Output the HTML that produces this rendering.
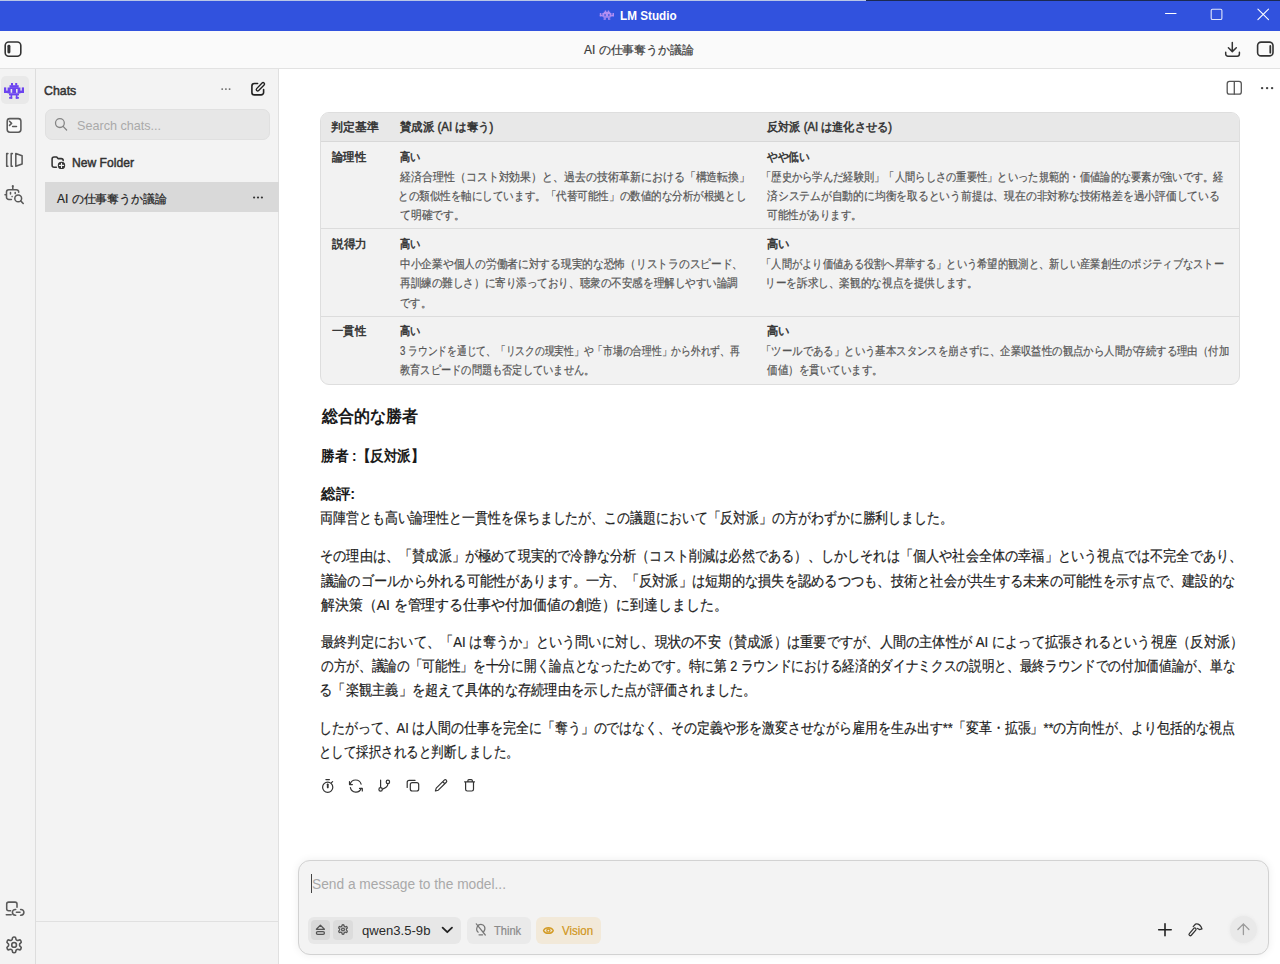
<!DOCTYPE html>
<html><head><meta charset="utf-8">
<style>
*{margin:0;padding:0;box-sizing:border-box}
html,body{width:1280px;height:964px;overflow:hidden;background:#fff}
body{position:relative;font-family:"Liberation Sans",sans-serif;color:#222}
.a{position:absolute}
.ln{position:absolute;white-space:nowrap;transform-origin:0 50%;-webkit-text-stroke:0.2px currentColor}
svg.i{position:absolute;overflow:visible;fill:none;stroke:#3a3a3a;stroke-width:1.5;stroke-linecap:round;stroke-linejoin:round}
#title{left:0;top:0;width:1280px;height:31px;background:#3152de}
#topline1{left:0;top:0;width:866px;height:1px;background:#b9c6e6}
#topline2{left:866px;top:0;width:414px;height:1px;background:#1b2a52}
#tool{left:0;top:31px;width:1280px;height:37px;background:#fafafa}
#toolb{left:0;top:68px;width:1280px;height:1px;background:#e2e2e2}
#rail{left:0;top:69px;width:35px;height:895px;background:#f3f3f3}
#railb{left:35px;top:69px;width:1px;height:895px;background:#dddddd}
#side{left:36px;top:69px;width:242px;height:895px;background:#f3f3f3}
#sideb{left:278px;top:69px;width:1px;height:895px;background:#e0e0e0}
#main{left:279px;top:69px;width:1001px;height:895px;background:#fff}
#invbg{left:0.5px;top:75.8px;width:28.5px;height:28.3px;background:#e9e9e9;border-radius:5px}
#search{left:44.5px;top:109px;width:225px;height:30.5px;background:#e7e7e7;border:1px solid #e0e0e0;border-radius:7px}
#sel{left:44.5px;top:182.2px;width:234px;height:30.3px;background:#d9d9d9}
#sidefoot{left:36px;top:921px;width:242px;height:1px;background:#e0e0e0}
#table{left:320px;top:112px;width:920px;height:273px;background:#f2f2f2;border:1px solid #dedede;border-radius:9px;overflow:hidden}
#thead{left:0;top:0;width:918px;height:29px;background:#e8e8e8;border-bottom:1px solid #d8d8d8}
.rowb{position:absolute;left:0;width:918px;height:1px;background:#dcdcdc}
#input{left:298px;top:860px;width:970.5px;height:94.5px;background:#f3f3f3;border:1px solid #d2d2d2;border-radius:12px;box-shadow:0 0 8px rgba(0,0,0,0.07)}
#cursor{left:310.5px;top:874px;width:1.5px;height:18.5px;background:#444}
#pill{left:307.5px;top:916.5px;width:153px;height:27.5px;background:#e7e7e7;border-radius:6px}
#ej{left:311px;top:919.5px;width:19px;height:20.5px;background:#d9d9d9;border-radius:4px}
#gr{left:333px;top:919.5px;width:19.5px;height:20.5px;background:#dcdcdc;border-radius:4px}
#think{left:466.5px;top:916.5px;width:64px;height:27.5px;background:#eaeaea;border-radius:6px}
#vision{left:536px;top:916.5px;width:64.5px;height:27.5px;background:#f2e9d9;border-radius:6px}
#send{left:1229.5px;top:915.8px;width:27.5px;height:27.5px;background:#e9e9e9;border-radius:50%;box-shadow:0 0 3px 1px #ececec}
</style></head><body>
<div id="title" class="a"></div>
<div id="topline1" class="a"></div>
<div id="topline2" class="a"></div>
<div id="tool" class="a"></div>
<div id="toolb" class="a"></div>
<div id="rail" class="a"></div>
<div id="railb" class="a"></div>
<div id="side" class="a"></div>
<div id="sideb" class="a"></div>
<div id="main" class="a"></div>
<div id="invbg" class="a"></div>
<div id="search" class="a"></div>
<div id="sel" class="a"></div>
<div id="sidefoot" class="a"></div>
<div id="table" class="a">
  <div id="thead" class="a"></div>
  <div class="rowb" style="top:115px"></div>
  <div class="rowb" style="top:203px"></div>
</div>
<div id="input" class="a"></div>
<div id="cursor" class="a"></div>
<div id="pill" class="a"></div>
<div id="ej" class="a"></div>
<div id="gr" class="a"></div>
<div id="think" class="a"></div>
<div id="vision" class="a"></div>
<div id="send" class="a"></div>
<svg class="a" style="left:0;top:0;overflow:visible" width="1280" height="964" viewBox="0 0 1280 964" fill="none" stroke-linecap="round" stroke-linejoin="round">
<defs>
<g id="inv">
<rect x="7" y="0" width="2" height="2.6"/><rect x="11.2" y="0" width="2" height="2.6"/>
<rect x="5.5" y="2.2" width="9.2" height="2.6"/>
<path fill-rule="evenodd" d="M3.6 4.4h12.8v6.2H3.6z M6.6 6h1.6v3.8H6.6z M12 6h1.6v3.8H12z"/>
<rect x="0" y="4.4" width="2.2" height="5.6"/><rect x="0" y="7.6" width="4" height="2.4"/>
<rect x="17.8" y="4.4" width="2.2" height="5.6"/><rect x="16" y="7.6" width="4" height="2.4"/>
<rect x="5" y="10.4" width="10" height="2"/>
<rect x="6.5" y="12" width="1.7" height="3.7"/><rect x="5.1" y="13.9" width="3.1" height="1.8"/>
<rect x="11.8" y="12" width="1.7" height="3.7"/><rect x="11.8" y="13.9" width="3.1" height="1.8"/>
</g>
<path id="gear" d="M12.22 2h-.44a2 2 0 0 0-2 2v.18a2 2 0 0 1-1 1.73l-.43.25a2 2 0 0 1-2 0l-.15-.08a2 2 0 0 0-2.73.73l-.22.38a2 2 0 0 0 .73 2.73l.15.1a2 2 0 0 1 1 1.72v.51a2 2 0 0 1-1 1.74l-.15.09a2 2 0 0 0-.73 2.73l.22.38a2 2 0 0 0 2.73.73l.15-.08a2 2 0 0 1 2 0l.43.25a2 2 0 0 1 1 1.73V20a2 2 0 0 0 2 2h.44a2 2 0 0 0 2-2v-.18a2 2 0 0 1 1-1.73l.43-.25a2 2 0 0 1 2 0l.15.08a2 2 0 0 0 2.73-.73l.22-.39a2 2 0 0 0-.73-2.73l-.15-.08a2 2 0 0 1-1-1.74v-.5a2 2 0 0 1 1-1.74l.15-.09a2 2 0 0 0 .73-2.73l-.22-.38a2 2 0 0 0-2.73-.73l-.15.08a2 2 0 0 1-2 0l-.43-.25a2 2 0 0 1-1-1.73V4a2 2 0 0 0-2-2z M15 12a3 3 0 1 1-6 0a3 3 0 1 1 6 0z"/>
</defs>
<!-- title bar -->
<g stroke="#ffffff" stroke-width="1.1">
<path d="M1165.5 13.5H1176"/>
<rect x="1211.2" y="9.2" width="10.7" height="10.3" rx="1.3" stroke="#dfe5fb"/>
<path d="M1257.9 9.1L1268.5 19.6M1268.5 9.1L1257.9 19.6"/>
</g>
<use href="#inv" transform="translate(599.8,10.5) scale(0.71,0.58)" fill="#b28ef2"/>
<!-- toolbar -->
<g stroke="#333" stroke-width="1.6">
<rect x="5.2" y="42" width="15.6" height="14.2" rx="3.5"/>
<rect x="1257.6" y="42.1" width="15.4" height="13.8" rx="3.5"/>
<path d="M1232.3 42.6V51.3M1228.4 47.8L1232.3 51.6L1236.3 47.8M1225.7 52.2V54a2.2 2.2 0 0 0 2.2 2.2H1237.2a2.2 2.2 0 0 0 2.2-2.2V52.2" stroke-width="1.5"/>
</g>
<rect x="7.4" y="44.8" width="3" height="8.6" rx="1.4" fill="#333"/>
<rect x="1269.4" y="45" width="1.8" height="8.6" rx="0.9" fill="#333"/>
<!-- main top right -->
<g stroke="#555" stroke-width="1.3">
<rect x="1227.2" y="81.4" width="14.1" height="12.8" rx="2.3"/>
<path d="M1234.3 81.6V94"/>
</g>
<g fill="#444"><circle cx="1262.1" cy="88.1" r="1.2"/><circle cx="1267.1" cy="88.1" r="1.2"/><circle cx="1272.1" cy="88.1" r="1.2"/></g>
<!-- rail -->
<use href="#inv" transform="translate(4,83)" fill="#6c44ef"/>
<g stroke="#5a5a5a" stroke-width="1.55">
<rect x="7.2" y="118.6" width="13.7" height="13.6" rx="2.6" fill="#fafafa"/>
<path d="M9.5 121.3L11.6 123.4L9.5 125.4M12.6 126.4H16.5"/>
<path d="M7.9 153.6H6.7V166.2H7.9M12.4 153.6H11.2V166.2H12.4M15.8 153.5L22.1 155.8V164L15.8 166.3Z"/>
<path d="M12.8 187V189.6M11.4 199.5H8.8a2.3 2.3 0 0 1-2.3-2.3V192a2.3 2.3 0 0 1 2.3-2.3H16.4a2.3 2.3 0 0 1 2.3 2.3V192.2M5 194.7H6.4M10.5 192.6V194M15.2 192.4V193.6"/>
<circle cx="18.2" cy="198.4" r="3.4"/><path d="M20.7 200.9L23.2 203.5"/>
<path d="M10.6 910.7H8.7a2 2 0 0 1-2-2V904.1a2 2 0 0 1 2-2H15a2 2 0 0 1 2 2V907.3M6.3 914.7H11.2M15.7 909.4H15.3a2.9 2.9 0 0 0 0 5.8H15.7M20.6 909.4H21a2.9 2.9 0 0 1 0 5.8H20.6M16.4 912.3H20"/>
</g>
<circle cx="12.8" cy="186.2" r="1.1" fill="#5a5a5a"/><circle cx="12.1" cy="196.6" r="0.8" fill="#5a5a5a"/>
<use href="#gear" transform="translate(4.62,935.4) scale(0.79)" stroke="#555" stroke-width="2"/>
<!-- sidebar -->
<g fill="#666"><circle cx="222.2" cy="89.1" r="0.95"/><circle cx="225.9" cy="89.1" r="0.95"/><circle cx="229.6" cy="89.1" r="0.95"/></g>
<g fill="#333"><circle cx="254.1" cy="197.5" r="1.1"/><circle cx="258" cy="197.5" r="1.1"/><circle cx="261.9" cy="197.5" r="1.1"/></g>
<g stroke="#222" stroke-width="1.6">
<path d="M257.6 83.5H254.4a2.5 2.5 0 0 0-2.5 2.5V92.4a2.5 2.5 0 0 0 2.5 2.5H261.1a2.5 2.5 0 0 0 2.5-2.5V89.5"/>
<rect x="0" y="-1.4" width="10.6" height="2.8" rx="1.4" transform="translate(256.7,90.6) rotate(-46)" stroke-width="1.4"/>
</g>
<g stroke="#858585" stroke-width="1.3"><circle cx="59.9" cy="123.1" r="4.4"/><path d="M63.1 126.4L66.6 130"/></g>
<g stroke="#333" stroke-width="1.55">
<path d="M56.4 167.2H54.1a2 2 0 0 1-2-2V159a2 2 0 0 1 2-2H56.7l1.3 1.6H61.2a2 2 0 0 1 2 2V160.6"/>
<circle cx="61.5" cy="165.4" r="3.1" fill="#333" stroke-width="1.2"/><path d="M61.5 163.3V167.5M59.4 165.4H63.6" stroke="#f3f3f3" stroke-width="1.1"/>
</g>
<!-- actions -->
<g stroke="#333" stroke-width="1.2">
<circle cx="327.7" cy="787.3" r="5.1"/><path d="M325.9 779.6H329.4M327.7 784.4V787.4M331.5 782.7L332.6 781.6" /><path d="M327.7 784.3V787.5" stroke-width="1.7"/>
<path d="M350.2 784.4A5.6 5.6 0 0 1 361.1 784.2M350.4 787.6A5.6 5.6 0 0 0 361.2 788.2M349.5 781.6V784.6H352.4M362.3 791V788.4H359.5"/>
<path d="M380.6 780.2V787.3M387.9 783.8C387.9 787 384.5 788.4 382.5 789.1"/><circle cx="380.6" cy="789.4" r="1.7"/><circle cx="387.9" cy="781.9" r="1.7"/>
<path d="M415.1 780.3H409.2a2 2 0 0 0-2 2V787.4"/><rect x="410.3" y="782.6" width="8.4" height="8.4" rx="2"/>
<path d="M0 0L2.6 -1.45H13.9a1.45 1.45 0 0 1 0 2.9H2.6Z M11.8 -1.45V1.45" transform="translate(435.4,791) rotate(-44.7)" stroke-width="1.15"/>
<path d="M464.6 781.8H474.5M467.9 781.6V780.6a1 1 0 0 1 1-1H471.3a1 1 0 0 1 1 1V781.6M465.6 781.9V789.3a1.7 1.7 0 0 0 1.7 1.7H471.8a1.7 1.7 0 0 0 1.7-1.7V781.9"/>
</g>
<!-- input -->
<g stroke="#555" stroke-width="1.3">
<path d="M316.4 929.3L320.4 925.1L324.4 929.3Z"/><rect x="316.4" y="931.6" width="8" height="2.7" rx="1.35"/>
</g>
<use href="#gear" transform="translate(337.3,923.8) scale(0.475)" stroke="#555" stroke-width="2.7"/>
<path d="M442.6 927.6L447.3 932.2L452 927.6" stroke="#222" stroke-width="1.8"/>
<g stroke="#777" stroke-width="1.2">
<path d="M478.2 932.2C476.5 930.8 476.3 928.6 477.4 926.4C478.9 923.6 483.1 923.7 484.5 926.6C485.4 928.6 484.9 930.5 483.4 932.1M479 934.8H482.6M476.3 923.8L485.3 935"/>
</g>
<g stroke="#d39b25" stroke-width="1.3">
<path d="M543.5 930.6C545.4 926.8 551.4 926.8 553.3 930.6C551.4 934.4 545.4 934.4 543.5 930.6Z"/><circle cx="548.4" cy="930.6" r="1.6"/>
</g>
<path d="M1158.7 929.8H1171.2M1165 923.7V935.8" stroke="#222" stroke-width="1.6"/>
<g stroke="#333" stroke-width="1.25">
<rect x="-0.5" y="-1.3" width="9.4" height="2.6" rx="1.3" transform="translate(1189.8,935) rotate(-49)"/>
<path d="M1193.2 926.6L1195.6 924C1198.3 923.6 1200.8 925.6 1202 928.9L1199.4 929.6L1197.6 928.4"/>
</g>
<path d="M1243.4 934.5V923.9M1237.9 929.5L1243.4 923.9L1248.9 929.5" stroke="#9c9c9c" stroke-width="1.3"/>
</svg>

<div id="L_tbar" class="ln fit" style="left:584.00px;top:44.20px;width:110.02px;transform:scaleX(0.9941);font-size:12px;line-height:12px;font-weight:400;color:#3a3a3a">AI の仕事奪うか議論</div>
<div id="L_sel" class="ln fit" style="left:57.00px;top:192.70px;width:110.02px;transform:scaleX(0.9941);font-size:12px;line-height:12px;font-weight:400;color:#222">AI の仕事奪うか議論</div>
<div id="L_th1" class="ln fit" style="left:331.20px;top:120.50px;width:47.42px;transform:scaleX(0.9879);font-size:12px;line-height:12px;font-weight:600;color:#333;font-weight:400;-webkit-text-stroke:0.5px currentColor">判定基準</div>
<div id="L_th2" class="ln fit" style="left:400.00px;top:120.50px;width:93.41px;transform:scaleX(0.9532);font-size:12px;line-height:12px;font-weight:600;color:#333;font-weight:400;-webkit-text-stroke:0.5px currentColor">賛成派 (AI は奪う)</div>
<div id="L_th3" class="ln fit" style="left:767.00px;top:120.50px;width:125.00px;transform:scaleX(0.9328);font-size:12px;line-height:12px;font-weight:600;color:#333;font-weight:400;-webkit-text-stroke:0.5px currentColor">反対派 (AI は進化させる)</div>
<div id="L_c1r1" class="ln fit" style="left:332.00px;top:151.30px;width:34.12px;transform:scaleX(0.9477);font-size:12px;line-height:12px;font-weight:600;color:#333;font-weight:400;-webkit-text-stroke:0.5px currentColor">論理性</div>
<div id="L_c2r1b" class="ln fit" style="left:400.00px;top:151.30px;width:20.40px;transform:scaleX(0.8502);font-size:12px;line-height:12px;font-weight:600;color:#333;font-weight:400;-webkit-text-stroke:0.5px currentColor">高い</div>
<div id="L_c2r1l1" class="ln fit" style="left:400.00px;top:170.50px;width:350.23px;transform:scaleX(0.9121);font-size:12px;line-height:12px;font-weight:400;color:#555">経済合理性（コスト対効果）と、過去の技術革新における「構造転換」</div>
<div id="L_c2r1l2" class="ln fit" style="left:398.00px;top:189.90px;width:348.14px;transform:scaleX(0.8791);font-size:12px;line-height:12px;font-weight:400;color:#555">との類似性を軸にしています。「代替可能性」の数値的な分析が根拠とし</div>
<div id="L_c2r1l3" class="ln fit" style="left:400.00px;top:209.20px;width:64.84px;transform:scaleX(0.9006);font-size:12px;line-height:12px;font-weight:400;color:#555">て明確です。</div>
<div id="L_c3r1b" class="ln fit" style="left:767.00px;top:151.30px;width:42.62px;transform:scaleX(0.8879);font-size:12px;line-height:12px;font-weight:600;color:#333;font-weight:400;-webkit-text-stroke:0.5px currentColor">やや低い</div>
<div id="L_c3r1l1" class="ln fit" style="left:761.00px;top:170.50px;width:462.71px;transform:scaleX(0.8569);font-size:12px;line-height:12px;font-weight:400;color:#555">「歴史から学んだ経験則」「人間らしさの重要性」といった規範的・価値論的な要素が強いです。経</div>
<div id="L_c3r1l2" class="ln fit" style="left:767.00px;top:189.90px;width:452.80px;transform:scaleX(0.8984);font-size:12px;line-height:12px;font-weight:400;color:#555">済システムが自動的に均衡を取るという前提は、現在の非対称な技術格差を過小評価している</div>
<div id="L_c3r1l3" class="ln fit" style="left:767.00px;top:209.20px;width:94.88px;transform:scaleX(0.8785);font-size:12px;line-height:12px;font-weight:400;color:#555">可能性があります。</div>
<div id="L_c1r2" class="ln fit" style="left:332.00px;top:238.00px;width:35.03px;transform:scaleX(0.9731);font-size:12px;line-height:12px;font-weight:600;color:#333;font-weight:400;-webkit-text-stroke:0.5px currentColor">説得力</div>
<div id="L_c2r2b" class="ln fit" style="left:400.00px;top:238.00px;width:20.40px;transform:scaleX(0.8502);font-size:12px;line-height:12px;font-weight:600;color:#333;font-weight:400;-webkit-text-stroke:0.5px currentColor">高い</div>
<div id="L_c2r2l1" class="ln fit" style="left:400.00px;top:257.80px;width:343.18px;transform:scaleX(0.8937);font-size:12px;line-height:12px;font-weight:400;color:#555">中小企業や個人の労働者に対する現実的な恐怖（リストラのスピード、</div>
<div id="L_c2r2l2" class="ln fit" style="left:400.00px;top:276.60px;width:338.00px;transform:scaleX(0.8802);font-size:12px;line-height:12px;font-weight:400;color:#555">再訓練の難しさ）に寄り添っており、聴衆の不安感を理解しやすい論調</div>
<div id="L_c2r2l3" class="ln fit" style="left:400.00px;top:296.80px;width:30.93px;transform:scaleX(0.8591);font-size:12px;line-height:12px;font-weight:400;color:#555">です。</div>
<div id="L_c3r2b" class="ln fit" style="left:767.00px;top:238.00px;width:22.58px;transform:scaleX(0.9407);font-size:12px;line-height:12px;font-weight:600;color:#333;font-weight:400;-webkit-text-stroke:0.5px currentColor">高い</div>
<div id="L_c3r2l1" class="ln fit" style="left:761.00px;top:257.80px;width:463.08px;transform:scaleX(0.8576);font-size:12px;line-height:12px;font-weight:400;color:#555">「人間がより価値ある役割へ昇華する」という希望的観測と、新しい産業創生のポジティブなストー</div>
<div id="L_c3r2l2" class="ln fit" style="left:765.00px;top:276.60px;width:212.64px;transform:scaleX(0.8860);font-size:12px;line-height:12px;font-weight:400;color:#555">リーを訴求し、楽観的な視点を提供します。</div>
<div id="L_c1r3" class="ln fit" style="left:332.00px;top:325.40px;width:34.12px;transform:scaleX(0.9477);font-size:12px;line-height:12px;font-weight:600;color:#333;font-weight:400;-webkit-text-stroke:0.5px currentColor">一貫性</div>
<div id="L_c2r3b" class="ln fit" style="left:400.00px;top:325.40px;width:20.40px;transform:scaleX(0.8502);font-size:12px;line-height:12px;font-weight:600;color:#333;font-weight:400;-webkit-text-stroke:0.5px currentColor">高い</div>
<div id="L_c2r3l1" class="ln fit" style="left:400.00px;top:344.50px;width:339.60px;transform:scaleX(0.8124);font-size:12px;line-height:12px;font-weight:400;color:#555">3 ラウンドを通じて、「リスクの現実性」や「市場の合理性」から外れず、再</div>
<div id="L_c2r3l2" class="ln fit" style="left:400.00px;top:363.90px;width:194.24px;transform:scaleX(0.8519);font-size:12px;line-height:12px;font-weight:400;color:#555">教育スピードの問題も否定していません。</div>
<div id="L_c3r3b" class="ln fit" style="left:767.00px;top:325.40px;width:22.58px;transform:scaleX(0.9407);font-size:12px;line-height:12px;font-weight:600;color:#333;font-weight:400;-webkit-text-stroke:0.5px currentColor">高い</div>
<div id="L_c3r3l1" class="ln fit" style="left:761.00px;top:344.50px;width:468.08px;transform:scaleX(0.8668);font-size:12px;line-height:12px;font-weight:400;color:#555">「ツールである」という基本スタンスを崩さずに、企業収益性の観点から人間が存続する理由（付加</div>
<div id="L_c3r3l2" class="ln fit" style="left:767.00px;top:363.90px;width:115.99px;transform:scaleX(0.8787);font-size:12px;line-height:12px;font-weight:400;color:#555">価値）を貫いています。</div>
<div id="L_heading" class="ln fit" style="left:322.00px;top:408.00px;width:96.01px;transform:scaleX(0.9413);font-size:17px;line-height:17px;font-weight:700;color:#1a1a1a;-webkit-text-stroke:0">総合的な勝者</div>
<div id="L_winner" class="ln fit" style="left:321.00px;top:448.20px;width:103.65px;transform:scaleX(0.9078);font-size:15px;line-height:15px;font-weight:700;color:#1a1a1a;-webkit-text-stroke:0">勝者 :【反対派】</div>
<div id="L_sohyo" class="ln fit" style="left:321.00px;top:485.50px;width:34.03px;transform:scaleX(0.9723);font-size:15px;line-height:15px;font-weight:700;color:#1a1a1a;-webkit-text-stroke:0">総評:</div>
<div id="L_p1" class="ln fit" style="left:320.00px;top:510.00px;width:632.95px;transform:scaleX(0.8612);font-size:15px;line-height:15px;font-weight:400;color:#222">両陣営とも高い論理性と一貫性を保ちましたが、この議題において「反対派」の方がわずかに勝利しました。</div>
<div id="L_p2l1" class="ln fit" style="left:320.00px;top:548.00px;width:922.31px;transform:scaleX(0.8784);font-size:15px;line-height:15px;font-weight:400;color:#222">その理由は、「賛成派」が極めて現実的で冷静な分析（コスト削減は必然である）、しかしそれは「個人や社会全体の幸福」という視点では不完全であり、</div>
<div id="L_p2l2" class="ln fit" style="left:321.00px;top:572.50px;width:914.20px;transform:scaleX(0.8833);font-size:15px;line-height:15px;font-weight:400;color:#222">議論のゴールから外れる可能性があります。一方、「反対派」は短期的な損失を認めるつつも、技術と社会が共生する未来の可能性を示す点で、建設的な</div>
<div id="L_p2l3" class="ln fit" style="left:321.00px;top:596.50px;width:406.60px;transform:scaleX(0.9276);font-size:15px;line-height:15px;font-weight:400;color:#222">解決策（AI を管理する仕事や付加価値の創造）に到達しました。</div>
<div id="L_p3l1" class="ln fit" style="left:321.00px;top:633.80px;width:922.28px;transform:scaleX(0.8818);font-size:15px;line-height:15px;font-weight:400;color:#222">最終判定において、「AI は奪うか」という問いに対し、現状の不安（賛成派）は重要ですが、人間の主体性が AI によって拡張されるという視座（反対派）</div>
<div id="L_p3l2" class="ln fit" style="left:321.00px;top:658.10px;width:914.20px;transform:scaleX(0.8452);font-size:15px;line-height:15px;font-weight:400;color:#222">の方が、議論の「可能性」を十分に開く論点となったためです。特に第 2 ラウンドにおける経済的ダイナミクスの説明と、最終ラウンドでの付加価値論が、単な</div>
<div id="L_p3l3" class="ln fit" style="left:319.00px;top:682.00px;width:437.65px;transform:scaleX(0.8841);font-size:15px;line-height:15px;font-weight:400;color:#222">る「楽観主義」を超えて具体的な存続理由を示した点が評価されました。</div>
<div id="L_p4l1" class="ln fit" style="left:319.00px;top:719.70px;width:915.61px;transform:scaleX(0.8624);font-size:15px;line-height:15px;font-weight:400;color:#222">したがって、AI は人間の仕事を完全に「奪う」のではなく、その定義や形を激変させながら雇用を生み出す**「変革・拡張」**の方向性が、より包括的な視点</div>
<div id="L_p4l2" class="ln fit" style="left:319.00px;top:744.00px;width:199.74px;transform:scaleX(0.8323);font-size:15px;line-height:15px;font-weight:400;color:#222">として採択されると判断しました。</div>
<div id="L_lm" class="ln fit" style="left:620.00px;top:8.50px;width:56.65px;transform:scaleX(0.9017);font-size:13px;line-height:13px;font-weight:700;color:#fff;-webkit-text-stroke:0">LM Studio</div>
<div id="L_chats" class="ln fit" style="left:44.20px;top:83.80px;width:32.24px;transform:scaleX(0.9491);font-size:13px;line-height:13px;font-weight:600;color:#333333;font-weight:400;-webkit-text-stroke:0.5px currentColor">Chats</div>
<div id="L_search" class="ln fit" style="left:77.00px;top:118.80px;width:84.10px;transform:scaleX(0.9698);font-size:13px;line-height:13px;font-weight:399;color:#aaaaaa;-webkit-text-stroke:0">Search chats...</div>
<div id="L_newf" class="ln fit" style="left:71.60px;top:155.90px;width:61.92px;transform:scaleX(0.9316);font-size:13px;line-height:13px;font-weight:600;color:#333;font-weight:400;-webkit-text-stroke:0.5px currentColor">New Folder</div>
<div id="L_send" class="ln fit" style="left:311.60px;top:877.30px;width:194.02px;transform:scaleX(0.9815);font-size:14px;line-height:14px;font-weight:399;color:#a9a9a9;-webkit-text-stroke:0">Send a message to the model...</div>
<div id="L_qwen" class="ln fit" style="left:361.80px;top:924.00px;width:68.42px;transform:scaleX(1.0068);font-size:13px;line-height:13px;font-weight:399;color:#2a2a2a;-webkit-text-stroke:0">qwen3.5-9b</div>
<div id="L_think" class="ln fit" style="left:494.00px;top:924.50px;width:27.09px;transform:scaleX(0.9232);font-size:12px;line-height:12px;font-weight:400;color:#8a8a8a">Think</div>
<div id="L_vision" class="ln fit" style="left:562.00px;top:924.50px;width:31.05px;transform:scaleX(0.9563);font-size:12px;line-height:12px;font-weight:400;color:#d19620">Vision</div>
<script>
(function(){
  var els=document.querySelectorAll('.fit');
  for(var i=0;i<els.length;i++){
    var el=els[i];var w=parseFloat(el.style.width);
    el.style.transform='none';el.style.width='max-content';
    var r=el.getBoundingClientRect().width;
    if(r>0){el.style.transform='scaleX('+(w/r)+')';}
  }
})();
</script>
</body></html>
